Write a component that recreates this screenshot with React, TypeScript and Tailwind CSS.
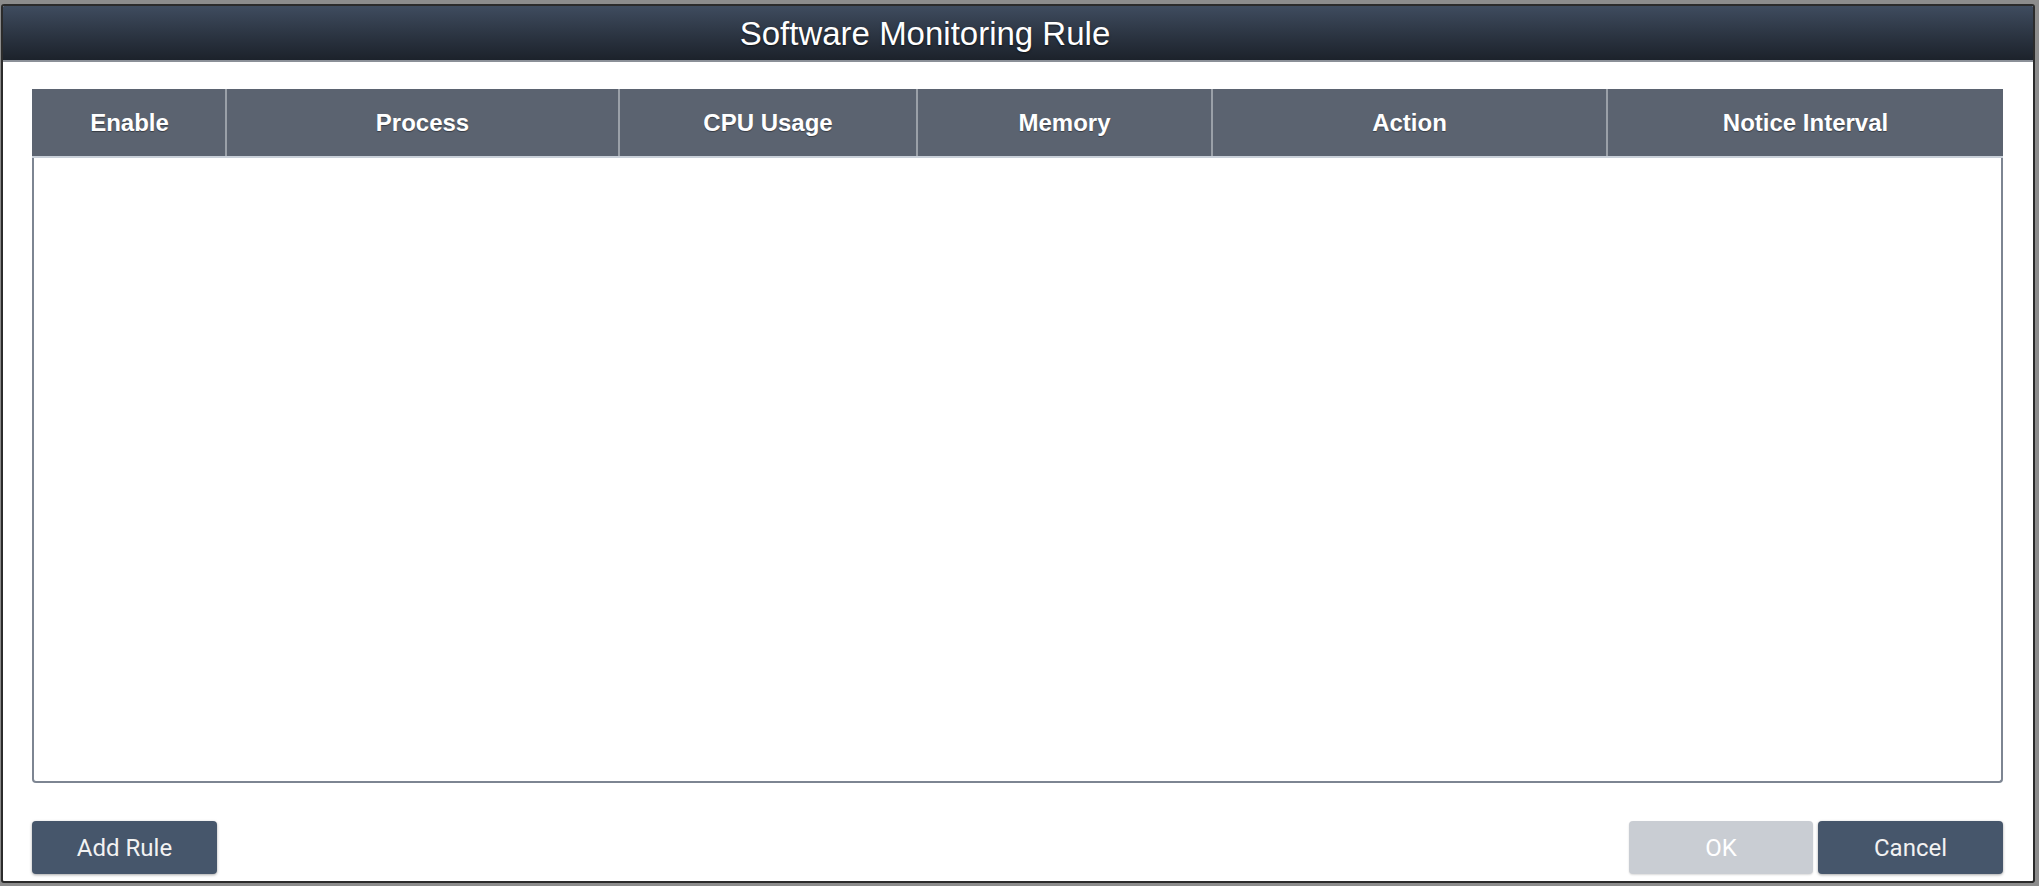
import React from 'react'

const columns = [
  { label: 'Enable' },
  { label: 'Process' },
  { label: 'CPU Usage' },
  { label: 'Memory' },
  { label: 'Action' },
  { label: 'Notice Interval' },
]

export default function App() {
  return (
    <div className="w-[2039px] h-[886px] bg-[#8c8c8c] pt-[4px] pl-[1px] pr-[4px] pb-[3px] overflow-hidden">
      <div className="h-full flex flex-col bg-white border-2 border-[#2b2b2b] rounded-[3px] overflow-hidden">
        {/* Title bar */}
        <div className="h-[56px] shrink-0 flex items-center justify-center pr-[186px] bg-gradient-to-b from-[#3f4c5f] to-[#1c222b] border-b-2 border-[#8b9098]">
          <span className="text-white text-[33px] leading-none [font-family:'Liberation_Sans',Arial,sans-serif] [text-shadow:0_1px_2px_rgba(0,0,0,0.6)]">
            Software Monitoring Rule
          </span>
        </div>

        {/* Body */}
        <div className="flex-1 flex flex-col pt-[27px] pl-[29px] pr-[30px] pb-[5px]">
          <div className="h-[694px] border-2 border-t-0 border-[#7d8592] rounded-b-[4px] flex flex-col">
            <div className="h-[69px] grid grid-cols-[193px_393px_298px_295px_395px_1fr] bg-[#5b6370] border-b-2 border-[#c9d0d9] -mx-[2px]">
              {columns.map((c, i) => (
                <div
                  key={c.label}
                  className={
                    'flex items-center justify-center text-white font-bold text-[24px] [font-family:"Liberation_Sans",Arial,sans-serif] [text-shadow:0_1px_1px_rgba(0,0,0,0.4)]' +
                    (i > 0 ? ' border-l-2 border-[#9aa0a8]' : ' pl-[2px]')
                  }
                >
                  {c.label}
                </div>
              ))}
            </div>
            <div className="flex-1" />
          </div>

          <div className="mt-[38px] flex items-center justify-between">
            <button className="w-[185px] h-[53px] rounded-[4px] bg-[#46566b] text-[#f2f2f2] text-[24px] [font-family:Roboto,sans-serif] shadow-[0_1px_3px_rgba(0,0,0,0.35)]">
              Add Rule
            </button>
            <div className="flex gap-[5px]">
              <button className="w-[184px] h-[53px] rounded-[4px] bg-[#c9cdd3] text-white text-[24px] [font-family:Roboto,sans-serif] shadow-[0_1px_2px_rgba(0,0,0,0.15)]">
                OK
              </button>
              <button className="w-[185px] h-[53px] rounded-[4px] bg-[#46566b] text-[#f2f2f2] text-[24px] [font-family:Roboto,sans-serif] shadow-[0_1px_3px_rgba(0,0,0,0.35)]">
                Cancel
              </button>
            </div>
          </div>
        </div>
      </div>
    </div>
  )
}
